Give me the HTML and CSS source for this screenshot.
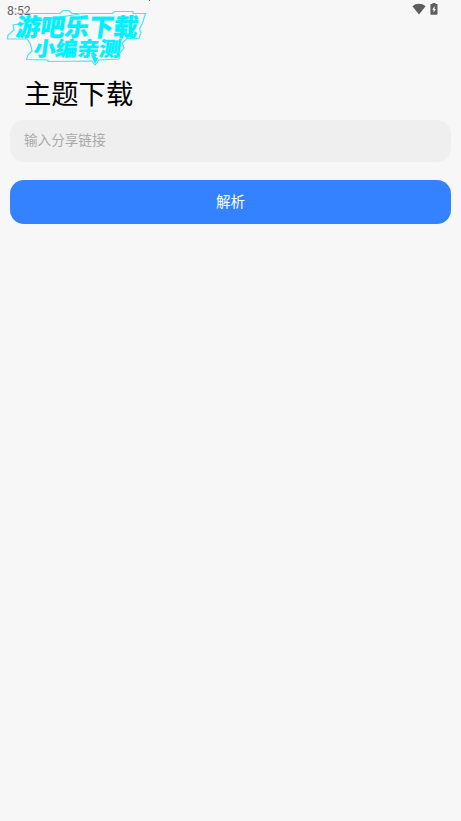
FILE: index.html
```html
<!DOCTYPE html>
<html lang="zh-CN">
<head>
<meta charset="utf-8">
<title>主题下载</title>
<link rel="stylesheet" href="styles.css">
</head>
<body>
<header class="status">
  <span class="time">8:52</span>
  <span class="status-icons">
    <svg width="14" height="12" viewBox="0 0 14 12"><path d="M0.4 3.2C4-.1 10-.1 13.6 3.2L7 11.5Z"/></svg>
    <svg width="8" height="12" viewBox="0 0 8 12"><path fill-rule="evenodd" d="M2.500 0h3v1H7q.5 0 .5.6v9.500q0 .6-.6.6H1q-.6 0-.6-.6V1.600Q.4 1 1 1h1.500ZM4.600 3 2.200 6.800h1.300v3L5.900 6H4.600Z"/></svg>
  </span>
</header>
<svg class="watermark" width="155" height="70" viewBox="0 0 155 70">
  <path class="outline" d="M16 13.500H60L63 10.500H69L72 13.500H79M82 13.500H112L115 11.500H133V13.500H145.500L142.500 23L139.500 29L141 33L139 38.500H127L122 43L124 48L120 53L119 59L99 60L95 65L92 61L48 61.500V60L26.500 59.500L28 55L32 51L30.500 44L27 39H7.500L8 35L14 30L13 25Z"/>
  <path class="tail" d="M91 55 95 64 98 58Z"/>
  <g class="mark-text">
    <text class="mark-large" transform="translate(15 35.500) skewX(-8)" textLength="122" lengthAdjust="spacingAndGlyphs">游吧乐下载</text>
    <text class="mark-small" transform="translate(33 56.300) skewX(-8)" textLength="87" lengthAdjust="spacingAndGlyphs">小编亲测</text>
  </g>
</svg>
<main class="page">
  <h1 class="title">主题下载</h1>
  <input class="link-input" type="text" placeholder="输入分享链接" aria-label="分享链接">
  <button class="parse" type="button">解析</button>
</main>
<svg class="speck" width="1" height="1"><rect width="1" height="1"/></svg>
</body>
</html>
```
FILE: styles.css
```css
* { box-sizing: border-box; }
body {
  margin: 0;
  min-height: 821px;
  background: #f7f7f7;
  font-family: "Noto Sans CJK SC", sans-serif;
  overflow: hidden;
}
.status {
  display: flex;
  justify-content: space-between;
  height: 20px;
  padding: 3px 23px 0 7px;
  color: #666;
  font: 12.3px/15px Roboto, sans-serif;
}
.time { padding-top: 1px; }
.status-icons { display: flex; gap: 4px; fill: #5e5e5e; }
.watermark { position: absolute; left: 0; top: 0; pointer-events: none; }
.outline { fill: none; stroke: #45e5f5; stroke-width: 1.2; }
.tail { fill: #00eeff; }
.mark-text {
  fill: #00f0ff;
  stroke: #00f0ff;
  stroke-width: 0.3;
  font-family: "Noto Sans CJK SC", sans-serif;
  font-weight: 900;
}
.mark-large { font-size: 24.5px; }
.mark-small { font-size: 20px; }
.speck { position: absolute; left: 149px; top: 0; fill: #555; }
.page { padding: 52px 10px 0; }
.title {
  margin: 0;
  padding-left: 14px;
  height: 48px;
  font-size: 27.3px;
  font-weight: 400;
  line-height: 40px;
  color: #000;
}
.link-input {
  display: block;
  width: 100%;
  height: 42px;
  padding: 0 14px 4px;
  border: 0;
  border-radius: 14px;
  outline: 0;
  background: #efefef;
  color: #222;
  font: 13.6px "Noto Sans CJK SC", sans-serif;
}
.link-input::placeholder { color: #aaa; opacity: 1; }
.parse {
  display: block;
  width: 100%;
  height: 44.5px;
  margin-top: 17.5px;
  padding: 0 0 2px;
  border: 0;
  border-radius: 14px;
  background: #3482ff;
  color: #fff;
  font: 14.5px "Noto Sans CJK SC", sans-serif;
}
```
